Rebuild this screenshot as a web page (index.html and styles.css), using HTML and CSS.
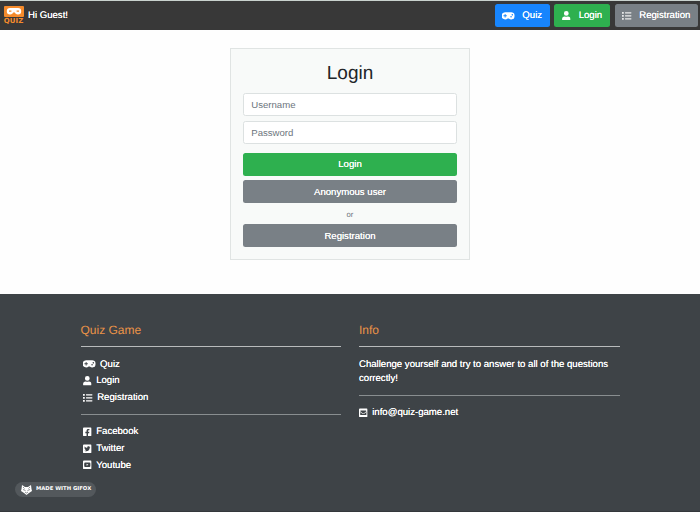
FILE: index.html
```html
<!DOCTYPE html>
<html lang="en">
<head>
<meta charset="utf-8">
<title>Quiz Game</title>
<link rel="stylesheet" href="styles.css">
</head>
<body>
<svg class="sprite" aria-hidden="true">
  <symbol id="pad" viewBox="0 60 640 392"><path fill-rule="evenodd" d="M480 70H160a186 186 0 1 0 130 318h60A186 186 0 1 0 480 70zM248 268a12 12 0 0 1-12 12h-52v52a12 12 0 0 1-12 12h-24a12 12 0 0 1-12-12v-52H84a12 12 0 0 1-12-12v-24a12 12 0 0 1 12-12h52v-52a12 12 0 0 1 12-12h24a12 12 0 0 1 12 12v52h52a12 12 0 0 1 12 12zm216 76a40 40 0 1 1 0-80 40 40 0 0 1 0 80zm64-96a40 40 0 1 1 0-80 40 40 0 0 1 0 80z"/></symbol>
  <symbol id="user" viewBox="0 0 448 512"><path d="M224 256a128 128 0 1 0 0-256 128 128 0 0 0 0 256zm90 32h-17a174 174 0 0 1-146 0h-17A134 134 0 0 0 0 422v42a48 48 0 0 0 48 48h352a48 48 0 0 0 48-48v-42a134 134 0 0 0-134-134z"/></symbol>
  <symbol id="list" viewBox="0 0 512 512"><path d="M16 48h64q16 0 16 16v64q0 16-16 16H16q-16 0-16-16V64q0-16 16-16zm0 160h64q16 0 16 16v64q0 16-16 16H16q-16 0-16-16v-64q0-16 16-16zm0 160h64q16 0 16 16v64q0 16-16 16H16q-16 0-16-16v-64q0-16 16-16zM176 64h320q16 0 16 16v32q0 16-16 16H176q-16 0-16-16V80q0-16 16-16zm0 160h320q16 0 16 16v32q0 16-16 16H176q-16 0-16-16v-32q0-16 16-16zm0 160h320q16 0 16 16v32q0 16-16 16H176q-16 0-16-16v-32q0-16 16-16z"/></symbol>
  <symbol id="facebook" viewBox="0 32 448 448"><path d="M400 32H48A48 48 0 0 0 0 80v352a48 48 0 0 0 48 48h137V328h-63v-72h63v-55c0-62 37-96 93-96 27 0 56 5 56 5v61h-31c-31 0-41 19-41 39v46h69l-11 72h-58v152h138a48 48 0 0 0 48-48V80a48 48 0 0 0-48-48z"/></symbol>
  <symbol id="twitter" viewBox="0 32 448 448"><path fill-rule="evenodd" d="M400 32H48A48 48 0 0 0 0 80v352a48 48 0 0 0 48 48h352a48 48 0 0 0 48-48V80a48 48 0 0 0-48-48zm-49 159v8c0 87-66 187-187 187-37 0-72-11-100-29 34 4 69-6 97-28-29 0-53-19-61-45 10 1 19 1 29-1-30-6-53-33-53-65 9 5 19 8 30 9-28-20-37-58-20-89 32 40 81 66 135 69-10-46 25-81 64-81 19 0 36 8 48 21 15-3 29-8 42-16-5 15-15 28-29 36 13-1 26-5 38-10-9 13-20 25-33 34z"/></symbol>
  <symbol id="youtube" viewBox="0 32 448 448"><path fill-rule="evenodd" d="M400 32H48A48 48 0 0 0 0 80v352a48 48 0 0 0 48 48h352a48 48 0 0 0 48-48V80a48 48 0 0 0-48-48zM105 142q119-12 238 0q37 2 39 36q8 78 0 156q-2 34-39 36q-119 12-238 0q-37-2-39-36q-8-78 0-156q2-34 39-36zM187 202v108l95-54z"/></symbol>
  <symbol id="mail" viewBox="0 32 448 448"><path fill-rule="evenodd" d="M400 32H48A48 48 0 0 0 0 80v352a48 48 0 0 0 48 48h352a48 48 0 0 0 48-48V80a48 48 0 0 0-48-48zM64 160q0-24 24-24h272q24 0 24 24v18L256 276q-32 23-64 0L64 178zm0 59 110 83q50 35 100 0l110-83v133q0 24-24 24H88q-24 0-24-24z"/></symbol>
</svg>
<header class="navbar">
  <div class="brand">
    <div class="logo">
      <svg class="logo-mask" viewBox="0 0 20 11"><path fill="#f58b2c" d="M1 0h18q1 0 1 1v9q0 1-1 1H1q-1 0-1-1V1q0-1 1-1z"/><path fill="#fff" d="M6 2h8a3.200 3.200 0 0 1 0 6.400q-1.500 0-2.500-1L10 6 8.500 7.400q-1 1-2.500 1A3.200 3.200 0 0 1 6 2z"/><path fill="#f58b2c" d="M5 4.600h2.400v1.200H5zm7.600 0H15v1.200h-2.400z"/></svg>
      <span class="logo-text">QUIZ</span>
    </div>
    <span class="greeting">Hi Guest!</span>
  </div>
  <nav class="actions">
    <a class="btn blue"><svg class="icon wide"><use href="#pad"/></svg>Quiz</a>
    <a class="btn green"><svg class="icon narrow"><use href="#user"/></svg>Login</a>
    <a class="btn gray"><svg class="icon"><use href="#list"/></svg>Registration</a>
  </nav>
</header>
<main>
  <form class="card">
    <h1>Login</h1>
    <input class="field" type="text" placeholder="Username">
    <input class="field" type="password" placeholder="Password">
    <button class="btn block green submit" type="button">Login</button>
    <button class="btn block gray" type="button">Anonymous user</button>
    <div class="or">or</div>
    <button class="btn block gray" type="button">Registration</button>
  </form>
</main>
<footer class="footer">
  <section>
    <h2>Quiz Game</h2>
    <hr>
    <ul>
      <li><svg class="icon wide"><use href="#pad"/></svg>Quiz</li>
      <li><svg class="icon narrow"><use href="#user"/></svg>Login</li>
      <li><svg class="icon"><use href="#list"/></svg>Registration</li>
    </ul>
    <hr class="dim">
    <ul>
      <li><svg class="icon narrow"><use href="#facebook"/></svg>Facebook</li>
      <li><svg class="icon narrow"><use href="#twitter"/></svg>Twitter</li>
      <li><svg class="icon narrow"><use href="#youtube"/></svg>Youtube</li>
    </ul>
  </section>
  <section>
    <h2>Info</h2>
    <hr>
    <p>Challenge yourself and try to answer to all of the questions correctly!</p>
    <hr class="dim">
    <div class="contact"><svg class="icon narrow"><use href="#mail"/></svg>info@quiz-game.net</div>
  </section>
</footer>
<div class="badge">
  <svg class="fox" viewBox="0 0 22 20"><path fill="#fff" d="M2 0l6 4h6l6-4 1 8 1 4-6 4-5 4-5-4-6-4 1-4z"/><path fill="none" stroke="#50555a" stroke-width="1.300" d="M4 4l3 3M18 4l-3 3M4 9l5 2M18 9l-5 2M8 14l3 2 3-2"/></svg>
  <span>MADE WITH GIFOX</span>
</div>
</body>
</html>
```
FILE: styles.css
```css
* { box-sizing: border-box; }
body {
  margin: 0;
  height: 512px;
  display: flex;
  flex-direction: column;
  overflow: hidden;
  background: #fefefe;
  color: #fff;
  font: 9.6px/14.4px "Liberation Sans", Arial, sans-serif;
  text-rendering: geometricPrecision;
}
.sprite { position: absolute; width: 0; height: 0; }
.navbar {
  height: 30px;
  flex: none;
  display: flex;
  align-items: center;
  justify-content: space-between;
  padding: 0 2px 0 3.500px;
  background: #383838;
  border-top: 1px solid #c9d2ce;
}
.brand { display: flex; align-items: center; gap: 4.500px; text-shadow: 0 0 .4px #fff; }
.greeting { padding-top: 1px; }
.logo { width: 20px; height: 18px; display: flex; flex-direction: column; align-items: center; margin-top: -2px; }
.logo-mask { width: 20px; height: 11px; flex: none; }
.logo-text { margin-top: 1px; color: #f58b2c; font: bold 7px/7px "DejaVu Sans", sans-serif; letter-spacing: .1px; text-shadow: none; }
.actions { display: flex; gap: 4.800px; }
.btn {
  height: 23px;
  display: flex;
  align-items: center;
  justify-content: center;
  padding: 0 8px;
  gap: 7.500px;
  border: 0;
  border-radius: 2.500px;
  color: #fff;
  font: inherit;
  text-shadow: 0 0 .3px #fff;
}
.actions .btn { padding: 0 7.600px; line-height: 16px; }
.actions .green { gap: 8px; }
.blue { background: #1785fd; }
.green { background: #2eb04f; }
.gray { background: #798086; }
.icon { width: 9.600px; height: 9.600px; flex: none; fill: #fff; }
.wide { width: 12.500px; }
.narrow { width: 8.600px; }
.actions .gray .icon { opacity: .85; }
.card {
  width: 239.500px;
  height: 212px;
  margin: 18px auto 0;
  padding: 12.500px 12px 0;
  background: #f8faf9;
  border: 1px solid #e0e4e3;
}
main { height: 263.500px; flex: none; display: flow-root; }
h1 { margin: 0 0 8.500px; color: #212529; font-size: 19px; font-weight: 400; line-height: 23px; text-align: center; }
.field {
  display: block;
  width: 100%;
  height: 23px;
  margin: 0 0 4.500px;
  padding: 0 7px;
  border: 1px solid #dce1e1;
  border-radius: 2.500px;
  background: #fff;
  font: inherit;
}
.field::placeholder { color: #6c757d; opacity: 1; }
.block { width: 100%; margin-bottom: 4.500px; padding-top: 1px; }
.submit { margin-top: 9px; padding-top: 0; }
.or { height: 12px; margin-bottom: 4.500px; color: #6c757d; font-size: 7.700px; line-height: 13px; text-align: center; }
.footer {
  flex: 1;
  display: grid;
  grid-template-columns: 260.500px 260.500px;
  gap: 18px;
  justify-content: center;
  align-content: start;
  padding-top: 28px;
  background: #3e4347;
  border-bottom: 1px solid #34383b;
  text-shadow: 0 0 .3px #fff;
}
h2 { margin: 0; color: #eb9347; font-size: 12px; font-weight: 400; line-height: 16px; text-shadow: none; }
hr { height: 1px; margin: 8.500px 0 10.500px; border: 0; background: #b8bbbc; }
.dim { background: #898e90; }
ul { list-style: none; margin: -1px 0 0; padding: 0 0 0 2.500px; }
li { display: flex; align-items: center; height: 16.800px; gap: 4.600px; }
li .icon { margin-top: -1.500px; }
p { margin: 0; }
ul + .dim { margin: 7px 0 10px; }
p + .dim { margin: 8.500px 0 10.200px; }
.contact { display: flex; align-items: center; gap: 4.600px; }
.contact .icon { margin-top: -1px; }
.badge {
  position: absolute;
  left: 15px;
  top: 482px;
  width: 81px;
  height: 15px;
  display: flex;
  align-items: center;
  gap: 4px;
  padding-left: 6px;
  border-radius: 8px;
  background: #53585c;
  white-space: nowrap;
  font: bold 5.300px/9px "DejaVu Sans", sans-serif;
}
.fox { width: 11px; height: 10px; flex: none; }
```
